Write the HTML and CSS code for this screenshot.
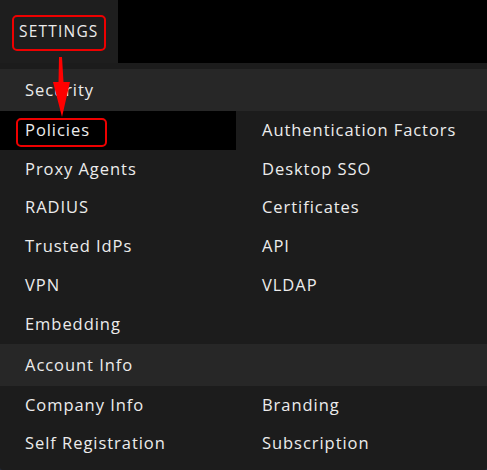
FILE: index.html
```html
<!DOCTYPE html>
<html>
<head>
<meta charset="utf-8">
<link rel="stylesheet" href="styles.css">
</head>
<body>
<div class="page">
  <div class="topbar">
    <div class="tab"><span class="tab-label">SETTINGS</span></div>
    <div class="topbar-rest"></div>
  </div>
  <div class="menu">
    <div class="section-header">Security</div>
    <div class="grid">
      <div class="item item-active">Policies</div>
      <div class="item">Authentication Factors</div>
      <div class="item">Proxy Agents</div>
      <div class="item">Desktop SSO</div>
      <div class="item">RADIUS</div>
      <div class="item">Certificates</div>
      <div class="item">Trusted IdPs</div>
      <div class="item">API</div>
      <div class="item">VPN</div>
      <div class="item">VLDAP</div>
      <div class="item">Embedding</div>
      <div class="item"></div>
    </div>
    <div class="section-header">Account Info</div>
    <div class="grid">
      <div class="item">Company Info</div>
      <div class="item">Branding</div>
      <div class="item">Self Registration</div>
      <div class="item">Subscription</div>
    </div>
  </div>
  <div class="mark mark-settings"></div>
  <div class="mark mark-policies"></div>
  <svg class="arrow" width="24" height="64" viewBox="0 0 24 64">
    <polygon points="9,0 12,0 13.5,25 20,25 12,60 3,25 8.5,25" fill="#ff0000"/>
  </svg>
</div>
</body>
</html>
```
FILE: styles.css
```css
html, body {
  margin: 0;
  padding: 0;
  background: #222a38;
}
.page {
  position: relative;
  width: 487px;
  height: 470px;
  overflow: hidden;
  background: #1c1c1c;
  border-radius: 0 0 3px 3px;
  font-family: "Open Sans", "Liberation Sans", sans-serif;
  font-size: 16.5px;
  color: #ececec;
  letter-spacing: 0.95px;
}
.topbar {
  display: flex;
  height: 63px;
  background: #000;
}
.tab {
  width: 118px;
  background: #1e1e1e;
  display: flex;
  align-items: center;
  padding-left: 19px;
  box-sizing: border-box;
}
.tab-label {
  font-size: 15.5px;
  letter-spacing: 1.2px;
  position: relative;
  top: -1px;
}
.topbar-rest {
  flex: 1;
}
.menu {
  padding-top: 6px;
}
.section-header {
  height: 42px;
  background: #272727;
  display: flex;
  align-items: center;
  padding-left: 25px;
  padding-bottom: 1px;
  box-sizing: border-box;
}
.grid {
  display: grid;
  grid-template-columns: 236px 1fr;
}
.item {
  height: 38.8px;
  display: flex;
  align-items: center;
  padding-left: 25px;
  padding-bottom: 2px;
  box-sizing: border-box;
}
.item:nth-child(2n) {
  padding-left: 26px;
}
.item-active {
  background: #000;
}
.mark {
  position: absolute;
  border: 2px solid #ee0000;
  border-radius: 5px;
  box-sizing: border-box;
}
.mark-settings {
  left: 12px;
  top: 15px;
  width: 94px;
  height: 36px;
}
.mark-policies {
  left: 16px;
  top: 118px;
  width: 91px;
  height: 29px;
}
.arrow {
  position: absolute;
  left: 50px;
  top: 57px;
}
```
